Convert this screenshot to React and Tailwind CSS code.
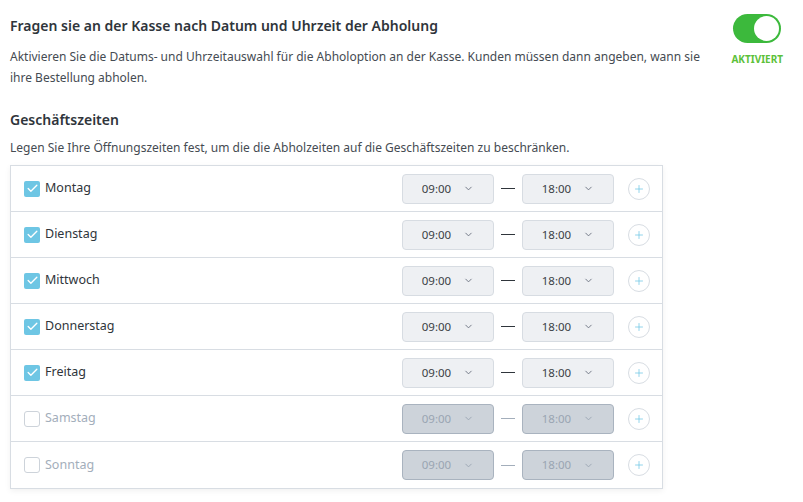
import { Check, ChevronDown, Plus } from "lucide-react";

const DAYS = [
  { name: "Montag", on: true },
  { name: "Dienstag", on: true },
  { name: "Mittwoch", on: true },
  { name: "Donnerstag", on: true },
  { name: "Freitag", on: true },
  { name: "Samstag", on: false },
  { name: "Sonntag", on: false },
];

function TimeSelect({ value, on }) {
  return (
    <div
      className={
        "flex h-[30px] w-[92px] items-center justify-center gap-3 rounded border text-[11.5px] " +
        (on
          ? "border-[#d7dce2] bg-[#eef0f3] text-[#3a3f45]"
          : "border-[#a9b3bf] bg-[#cdd3da] text-[#9aa5b2]")
      }
    >
      <span>{value}</span>
      <ChevronDown size={11} strokeWidth={2} className={on ? "text-[#6b7280]" : "text-[#9aa5b2]"} />
    </div>
  );
}

function DayRow({ day }) {
  return (
    <div className="flex h-[46px] items-center border-b border-[#d8dde3] last:border-b-0">
      <div className="flex flex-1 items-center gap-[5px] pl-[13px]">
        {day.on ? (
          <span className="flex h-4 w-4 items-center justify-center rounded-[2px] bg-[#6ec6e4]">
            <Check size={13} strokeWidth={2.5} className="text-white" />
          </span>
        ) : (
          <span className="h-4 w-4 rounded-[3px] border border-[#cdd3da] bg-white" />
        )}
        <span className={"text-[12.5px] " + (day.on ? "text-[#2f353b]" : "text-[#a3aebb]")}>
          {day.name}
        </span>
      </div>
      <TimeSelect value="09:00" on={day.on} />
      <span
        className={
          "mx-[7px] h-px w-[14px] " + (day.on ? "bg-[#2f353b]" : "bg-[#a3aebb]")
        }
      />
      <TimeSelect value="18:00" on={day.on} />
      <span className="ml-[14px] mr-[12px] flex h-[22px] w-[22px] items-center justify-center rounded-full border border-[#d8dde3] bg-white">
        <Plus size={12} strokeWidth={1.5} className="text-[#6ec6e4]" />
      </span>
    </div>
  );
}

export default function App() {
  return (
    <div
      className="h-[502px] w-[803px] bg-white px-[10px] pt-[14px] text-[#2f353b]"
      style={{ fontFamily: '"Noto Sans", "Open Sans", sans-serif' }}
    >
      <div className="flex items-start justify-between">
        <div>
          <h1 className="text-[14px] font-semibold leading-[24px]">
            Fragen sie an der Kasse nach Datum und Uhrzeit der Abholung
          </h1>
          <p className="mt-[8px] w-[702px] text-[12px] leading-[21px] text-[#454b52]">
            Aktivieren Sie die Datums- und Uhrzeitauswahl für die Abholoption an der Kasse. Kunden müssen dann angeben, wann sie ihre Bestellung abholen.
          </p>
        </div>
        <div className="mr-[10px] flex flex-col items-center">
          <span className="flex h-[29px] w-[48px] items-center justify-end rounded-full bg-[#3cb93c] px-[2px]">
            <span className="h-[25px] w-[25px] rounded-full bg-white" />
          </span>
          <span className="mt-[9px] text-[10px] font-bold text-[#5cc13a]">AKTIVIERT</span>
        </div>
      </div>

      <h2 className="mt-[21px] text-[14px] font-semibold leading-[22px]">Geschäftszeiten</h2>
      <p className="mt-[7px] text-[12px] leading-[20px] text-[#454b52]">
        Legen Sie Ihre Öffnungszeiten fest, um die die Abholzeiten auf die Geschäftszeiten zu beschränken.
      </p>

      <div className="mt-[7px] w-[653px] border border-[#d8dde3] bg-white shadow-[0_2px_6px_rgba(0,0,0,0.06)]">
        {DAYS.map((d) => (
          <DayRow key={d.name} day={d} />
        ))}
      </div>
    </div>
  );
}
